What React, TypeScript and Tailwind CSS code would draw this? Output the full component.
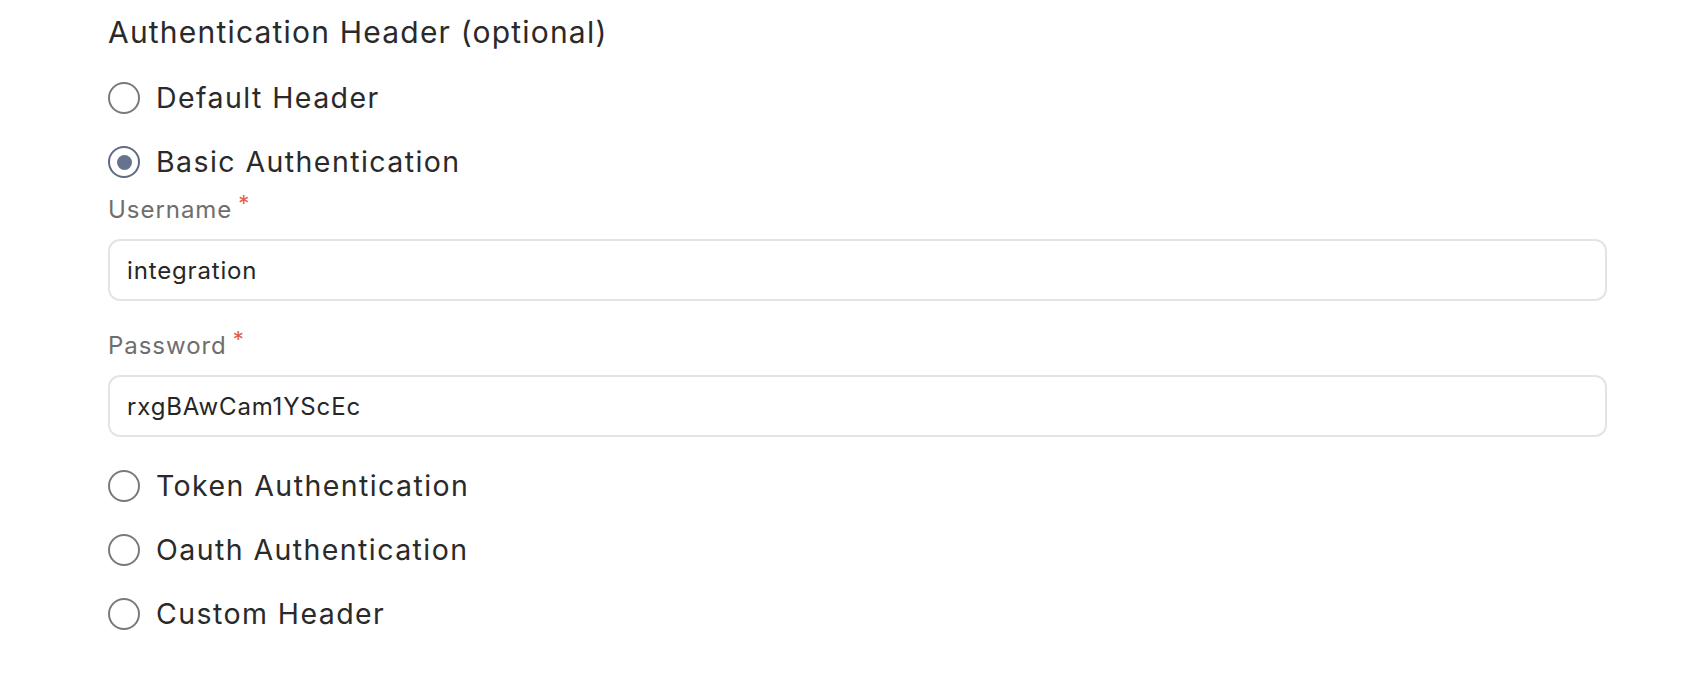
import { useState } from "react";

const options = [
  "Default Header",
  "Basic Authentication",
  "Token Authentication",
  "Oauth Authentication",
  "Custom Header",
];

function Radio({ checked }: { checked: boolean }) {
  return checked ? (
    <div className="w-8 h-8 rounded-full border-2 border-[#5e6c85] flex items-center justify-center flex-shrink-0">
      <div className="w-[15px] h-[15px] rounded-full bg-[#66738d]"></div>
    </div>
  ) : (
    <div className="w-8 h-8 rounded-full border-2 border-[#7a7a7a] flex-shrink-0"></div>
  );
}

function Field({ label, value }: { label: string; value: string }) {
  return (
    <div>
      <label className="flex items-start h-[45px] text-[24px] leading-[32px] tracking-[0.04em] text-[#6e6e6e]">
        {label}
        <span className="text-[#e0603f] text-[22px] leading-[22px] ml-[6px] mt-[-2px]">*</span>
      </label>
      <input
        readOnly
        value={value}
        className="w-full h-[62px] px-[17px] border-2 border-[#e4e4e4] rounded-[12px] text-[24px] tracking-[0.035em] text-[#262626] bg-white outline-none"
      />
    </div>
  );
}

export default function App() {
  const [selected, setSelected] = useState("Basic Authentication");

  return (
    <div className="w-[1696px] h-[680px] bg-white font-['Inter',sans-serif] text-[#2a2a2a]">
      <div className="pl-[108px] pr-[89px] pt-[12px]">
        <h2 className="text-[30px] leading-[40px] tracking-[0.04em] mb-[14px]">Authentication Header (optional)</h2>

        {options.map((opt) => (
          <div key={opt}>
            <button
              onClick={() => setSelected(opt)}
              className="flex items-center gap-[16px] h-16 text-[28.5px] tracking-[0.05em] text-left"
            >
              <Radio checked={selected === opt} />
              {opt}
            </button>

            {opt === "Basic Authentication" && selected === opt && (
              <div className="flex flex-col gap-[29px] mb-[17px]">
                <Field label="Username" value="integration" />
                <Field label="Password" value="rxgBAwCam1YScEc" />
              </div>
            )}
          </div>
        ))}
      </div>
    </div>
  );
}
